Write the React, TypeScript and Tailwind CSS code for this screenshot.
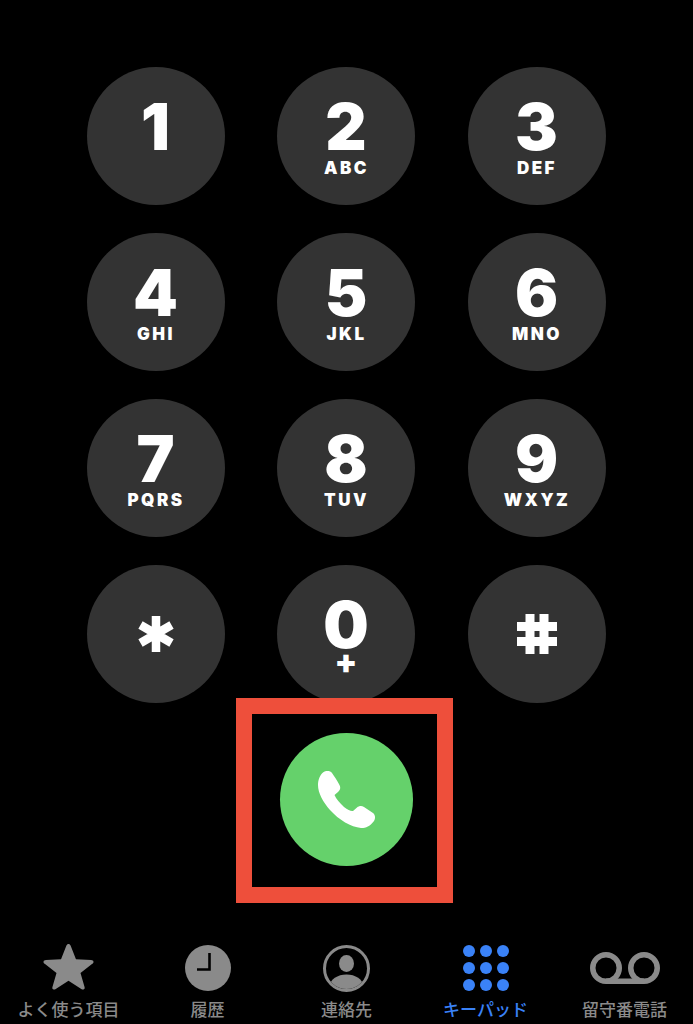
import React from "react";

const keys: [string, string][] = [
  ["1", ""], ["2", "ABC"], ["3", "DEF"],
  ["4", "GHI"], ["5", "JKL"], ["6", "MNO"],
  ["7", "PQRS"], ["8", "TUV"], ["9", "WXYZ"],
];

function Key({ d, s }: { d: string; s: string }) {
  return (
    <div className="w-[138px] h-[138px] rounded-full bg-[#333333] flex flex-col items-center text-white pt-[30px]">
      <div className="text-[64px] leading-[60px] font-black">{d}</div>
      {s && <div className="text-[17px] leading-[20px] font-black tracking-[2.5px] mt-[1px] pl-[1px]">{s}</div>}
    </div>
  );
}

function Tab({ label, color, children }: { label: string; color: string; children: React.ReactNode }) {
  return (
    <div className="flex flex-col items-center w-[139px]">
      <div className="h-[50px] flex items-center justify-center">{children}</div>
      <div className="mt-[6px] text-[17px] leading-[22px] font-medium whitespace-nowrap" style={{ color }}>{label}</div>
    </div>
  );
}

export default function App() {
  const gray = "#8a8a8a";
  return (
    <div className="w-[693px] h-[1024px] bg-black overflow-hidden flex flex-col items-center" style={{ fontFamily: '"Inter","Noto Sans CJK JP",sans-serif' }}>
      <div className="mt-[67px] ml-[-1px] grid grid-cols-[138px_138px_138px] gap-x-[52.5px] gap-y-[28px]">
        {keys.map(([d, s]) => <Key key={d} d={d} s={s} />)}
        <div className="w-[138px] h-[138px] rounded-full bg-[#333333] flex items-center justify-center">
          <svg width="38" height="38" viewBox="0 0 38 38" fill="none" stroke="#fff" strokeWidth="8.5">
            <path d="M19 1v36M3.5 10l31 18M34.5 10l-31 18" />
          </svg>
        </div>
        <div className="w-[138px] h-[138px] rounded-full bg-[#333333] flex flex-col items-center text-white pt-[30px]">
          <div className="text-[64px] leading-[60px] font-black">0</div>
          <div className="text-[33px] leading-[12px] font-black">+</div>
        </div>
        <div className="w-[138px] h-[138px] rounded-full bg-[#333333] flex items-center justify-center">
          <svg width="40" height="40" viewBox="0 0 40 40" fill="none" stroke="#fff" strokeWidth="9">
            <path d="M13 0v40M27 0v40M0 12.500h40M0 27.500h40" />
          </svg>
        </div>
      </div>

      <div className="mt-[-5px] ml-[-5px] w-[217px] h-[205px] border-[16px] border-[#ee4f3b] flex items-center justify-center pl-[4px] pb-[2px]">
        <div className="w-[133px] h-[133px] rounded-full bg-[#65d16b] flex items-center justify-center">
          <svg width="57" height="57" viewBox="0 0 57 57">
            <path fill="#fff" d="M5 1.500C8 -.5 12 -.5 14 2c2 3 5 7 7.500 12 1.500 3 .5 5-1.500 7l-3.500 3c1.500 4 5.500 8 9.500 12 4 3 7 4.500 9 4l4-3.500c2-1.500 4.500-2 7-.5l9 6c2.500 2 2.500 5.500 1 8-3 4-7.500 7.500-13 7-10-1-22-8-31-18C5 31 0 22 0 14 0 9 2 4 5 1.500z" />
          </svg>
        </div>
      </div>

      <div className="mt-[40px] w-[695px] shrink-0 flex">
        <Tab label="よく使う項目" color={gray}>
          <svg width="51" height="49" viewBox="-1 1.500 54 50" className="overflow-visible"><path fill={gray} d="M26 1.500c1 0 1.700.6 2.200 1.800l5.700 14.900 16 .7c1.400.1 2.300.6 2.500 1.500.3 1-.2 1.900-1.200 2.600L38.700 33l4.300 15c.3 1.200.1 2.100-.7 2.500-.8.500-1.700.3-2.800-.4L26 41.400l-13.500 8.700c-1.100.7-2 .9-2.800.4-.8-.4-1-1.300-.7-2.500l4.300-15L.8 23c-1-.7-1.500-1.600-1.200-2.600.2-.9 1.100-1.400 2.500-1.500l16-.7 5.700-14.900c.5-1.200 1.200-1.800 2.200-1.800z" transform="translate(0 -1) scale(1 .98)" /></svg>
        </Tab>
        <Tab label="履歴" color={gray}>
          <svg width="46" height="46" viewBox="0 0 46 46"><circle cx="23" cy="23" r="23" fill={gray} /><path d="M24.500 8v16.500H12" fill="none" stroke="#000" strokeWidth="2.600" /></svg>
        </Tab>
        <Tab label="連絡先" color={gray}>
          <svg width="47" height="47" viewBox="0 0 47 47">
            <defs><clipPath id="c"><circle cx="23.500" cy="23.500" r="20.500" /></clipPath></defs>
            <circle cx="23.500" cy="23.500" r="22" fill="none" stroke={gray} strokeWidth="3" />
            <ellipse cx="23.500" cy="18.500" rx="7.500" ry="8.500" fill={gray} />
            <ellipse cx="23.500" cy="41" rx="16.500" ry="11.500" fill={gray} clipPath="url(#c)" />
          </svg>
        </Tab>
        <Tab label="キーパッド" color="#3a82f7">
          <svg width="46" height="46" viewBox="0 0 46 46" fill="#3a82f7">
            {[6, 23, 40].flatMap((y) => [6, 23, 40].map((x) => <circle key={`${x}-${y}`} cx={x} cy={y} r="6" />))}
          </svg>
        </Tab>
        <Tab label="留守番電話" color={gray}>
          <svg width="70" height="32" viewBox="0 0 70 32" fill="none" stroke={gray} strokeWidth="5.500">
            <circle cx="16" cy="16" r="13.250" /><circle cx="54" cy="16" r="13.250" /><path d="M16 29.250h38" />
          </svg>
        </Tab>
      </div>
    </div>
  );
}
